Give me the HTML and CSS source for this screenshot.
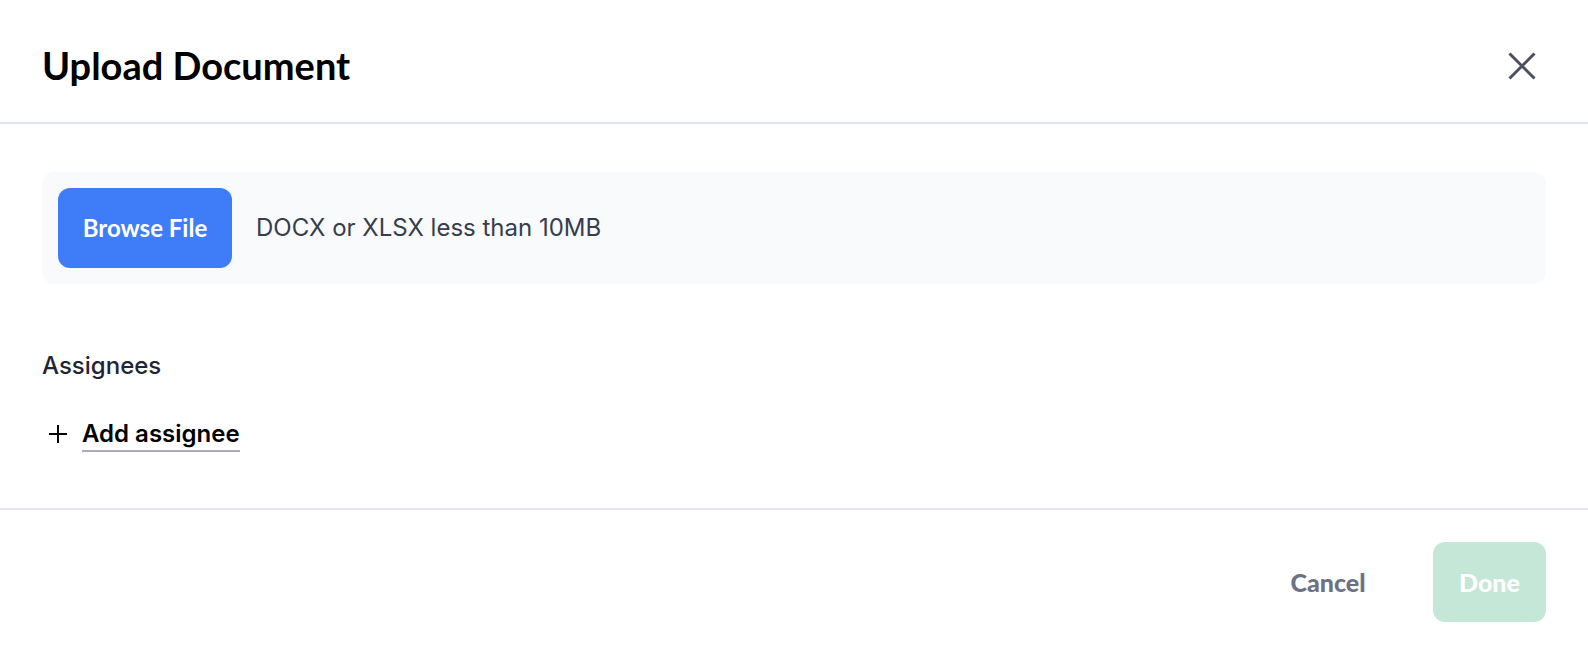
FILE: index.html
```html
<!DOCTYPE html>
<html lang="en">
	<head>
		<meta charset="utf-8">
		<title>Upload Document</title>
		<link rel="stylesheet" href="styles.css">
	</head>

	<body>
		<div class="modal">
			<header class="modal-header">
				<h1 class="title">Upload Document</h1>
				<button type="button" class="close" aria-label="Close">
					<svg width="28" height="28" viewBox="0 0 28 28"><path d="M1.5 1.5 L26.5 26.5 M26.5 1.5 L1.5 26.5"/></svg>
				</button>
			</header>

			<main class="modal-body">
				<div class="upload">
					<button type="button" class="button browse">Browse File</button>
					<span class="hint">DOCX or XLSX less than 10MB</span>
				</div>

				<h2 class="label">Assignees</h2>
				<button type="button" class="add">
					<svg width="20" height="20" viewBox="0 0 20 20"><path d="M10 1 V19 M1 10 H19"/></svg>
					<span class="add-text">Add assignee</span>
				</button>
			</main>

			<footer class="modal-footer">
				<button type="button" class="button cancel">Cancel</button>
				<button type="button" class="button done" disabled>Done</button>
			</footer>
		</div>
	</body>
</html>
```
FILE: styles.css
```css
body {
	margin: 0;
	background: #fff;
	font-family: Inter, "Liberation Sans", sans-serif;
	font-size: 24px;
	line-height: 32px;
}

button {
	border: 0;
	padding: 0;
	background: none;
	font: inherit;
	cursor: pointer;
}

svg {
	display: block;
	fill: none;
}

.modal-header {
	display: flex;
	align-items: flex-start;
	justify-content: space-between;
	padding: 42px 42px 32px;
	border-bottom: 2px solid #e0e3ee;
}

.title {
	margin: 0;
	font-family: Lato, sans-serif;
	font-size: 38px;
	font-weight: 700;
	line-height: 46px;
	color: #000;
}

.close {
	padding: 10px;
}

.close svg {
	stroke: #4a5060;
	stroke-width: 3;
}

.modal-body {
	padding: 48px 42px 56px;
}

.upload {
	display: flex;
	align-items: center;
	gap: 24px;
	padding: 16px;
	border-radius: 12px;
	background: #f9fafc;
}

.button {
	height: 80px;
	padding: 0 24px;
	border-radius: 12px;
	font-family: Lato, sans-serif;
	font-weight: 700;
}

.browse {
	min-width: 174px;
	background: #3f7cf7;
	color: #fff;
}

.hint {
	color: #363d4e;
}

.label {
	margin: 66px 0 36px;
	font-size: 24px;
	font-weight: 500;
	color: #1f2536;
}

.add {
	display: flex;
	align-items: flex-start;
	gap: 14px;
	padding-left: 6px;
	color: #000;
}

.add svg {
	margin-top: 6px;
	stroke: #000;
	stroke-width: 2;
}

.add-text {
	border-bottom: 2px solid #a9acba;
	font-weight: 600;
}

.modal-footer {
	display: flex;
	justify-content: flex-end;
	gap: 40px;
	padding: 32px 42px 24px;
	border-top: 2px solid #e0e6ed;
}

.cancel,
.done {
	font-size: 25px;
	font-weight: 900;
}

.cancel {
	min-width: 130px;
	color: #6b7283;
}

.done {
	min-width: 113px;
	background: #c4e7d7;
	color: #fff;
}
```
